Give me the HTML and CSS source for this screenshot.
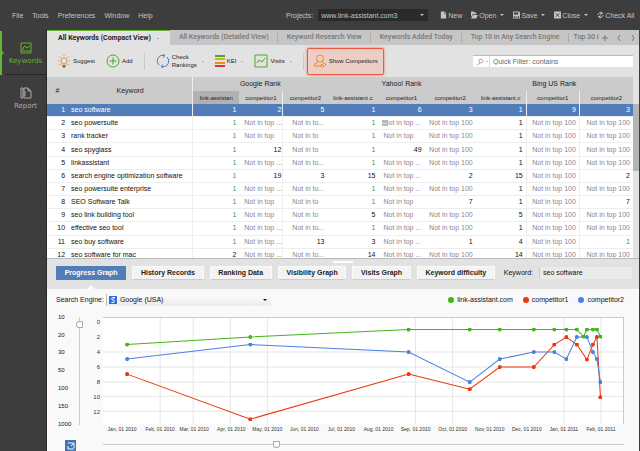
FILE: index.html
```html
<!DOCTYPE html>
<html lang="en">
<head>
    <meta charset="utf-8">
    <title>Rank Tracker</title>
    <link rel="stylesheet" href="styles.css">
</head>
<body>
    <header class="menubar">
        <nav class="menu">
            <a href="#">File</a>
            <a href="#">Tools</a>
            <a href="#">Preferences</a>
            <a href="#">Window</a>
            <a href="#">Help</a>
        </nav>
        <div class="project">
            <label for="project">Projects:</label>
            <span class="select dark">
                <select id="project"><option>www.link-assistant.com3</option></select>
            </span>
        </div>
        <div class="actions">
            <button><svg viewBox="0 0 8 8"><path d="M1 0h4v3h2v5H1zM5.500 0l2 2.500h-2z"/></svg>New</button>
            <button class="drop"><svg viewBox="0 0 8 8"><path d="M0 0h3l1 1h2v2H2L0 6zM2 4h6L6 8H0z"/></svg>Open</button>
            <button class="drop"><svg viewBox="0 0 8 8"><path fill-rule="evenodd" d="M0 0h7l1 1v7H0zM1 1v2.500h5V1zM1 5v2h6V5zM2 5.500h4v1H2z"/></svg>Save</button>
            <button class="drop"><svg viewBox="0 0 8 8"><path d="M0 0h8v8H0z"/><path class="cut" d="M2 2l4 4M6 2L2 6"/></svg>Close</button>
            <button><svg viewBox="0 0 8 8"><path class="line" d="M1 4a3 3 0 0 1 5-2M7 4a3 3 0 0 1-5 2"/><path d="M4 0l3 2-3 2zM4 4L1 6l3 2z"/></svg>Check All</button>
        </div>
    </header>

    <div class="app">
        <aside class="sidebar">
            <a href="#" class="side-item active">
                <svg viewBox="0 0 12 12"><path d="M1 1h10v10H1zM3 8V6l2-2 2 2 3-2M1 9h10"/></svg>
                Keywords
            </a>
            <a href="#" class="side-item">
                <svg viewBox="0 0 12 12"><path d="M1 1h2v10H1zM4 1h4l3 3v7H4zM8 1v3h3M5 4v5"/></svg>
                Report
            </a>
        </aside>

        <main class="main">
            <nav class="tabs">
                <a href="#" class="tab active">All Keywords (Compact View)</a>
                <a href="#" class="tab">All Keywords (Detailed View)</a>
                <a href="#" class="tab">Keyword Research View</a>
                <a href="#" class="tab">Keywords Added Today</a>
                <a href="#" class="tab">Top 10 in Any Search Engine</a>
                <a href="#" class="tab last">Top 30 i</a>
                <span class="tab-tools">
                    <button aria-label="Add tab"><svg viewBox="0 0 8 8"><path d="M4 1v6M1 4h6"/></svg></button>
                    <button aria-label="Previous"><svg viewBox="0 0 8 8"><path d="M5 1L3 4l2 3"/></svg></button>
                    <button aria-label="Next"><svg viewBox="0 0 8 8"><path d="M3 1l2 3-2 3"/></svg></button>
                </span>
            </nav>

            <div class="toolbar">
                <button class="tool">
                    <svg class="orange" viewBox="0 0 14 14"><path d="M5 10V9a3 3 0 1 1 4 0v1zM7 1v1M1 7h1M12 7h1M2.500 2.500l1 1M11.500 2.500l-1 1M2.500 11l1-1M11.500 11l-1-1"/><path class="base" d="M5 12h4M6 13h2"/></svg>
                    Suggest
                </button>
                <button class="tool">
                    <svg class="green" viewBox="0 0 14 14"><circle cx="7" cy="7" r="6"/><path d="M7 3.500v7M3.500 7h7"/></svg>
                    Add
                </button>
                <span class="divider"></span>
                <button class="tool drop">
                    <svg class="blue" viewBox="0 0 14 14"><path d="M3 11a5.500 5.500 0 0 1 5-9.400M11 3a5.500 5.500 0 0 1-5 9.400M7 0l2 1.600L7 3.500M7 10.500l-2 1.900L7 14"/></svg>
                    <span>Check<br>Rankings</span>
                </button>
                <button class="tool drop">
                    <svg class="bars" viewBox="0 0 10 14"><path class="b1" d="M0 2h10"/><path class="b2" d="M0 5h10"/><path class="b3" d="M0 9h10"/><path class="b4" d="M0 12h10"/></svg>
                    KEI
                </button>
                <button class="tool drop">
                    <svg class="green" viewBox="0 0 14 14"><path d="M1 1h12v12H1zM3 9l2-3 3 2 3-4"/></svg>
                    Visits
                </button>
                <span class="divider"></span>
                <button class="tool highlight">
                    <svg class="orange" viewBox="0 0 14 14"><circle cx="7" cy="4.500" r="3.500"/><path d="M5 8l-3.500 2v2h6M9 8l3.500 2v2"/><path d="M7 12l2-2 2 2-2 1z"/></svg>
                    Show Competitors
                </button>
                <div class="filter">
                    <button aria-label="Filter options"><svg viewBox="0 0 8 8"><circle cx="5" cy="3" r="2"/><path d="M4 5L1 7"/></svg></button>
                    <input type="text" aria-label="Quick filter" placeholder="Quick Filter: contains">
                </div>
            </div>

            <div class="grid">
                <table>
                    <colgroup>
                        <col class="c-num"><col class="c-key">
                        <col class="c-m"><col class="c-s"><col class="c-s">
                        <col class="c-l"><col class="c-m"><col class="c-l">
                        <col class="c-l"><col class="c-x"><col class="c-x">
                    </colgroup>
                    <thead>
                        <tr>
                            <th rowspan="2">#</th>
                            <th rowspan="2">Keyword</th>
                            <th colspan="3">Google Rank</th>
                            <th colspan="3">Yahoo! Rank</th>
                            <th colspan="3">Bing US Rank</th>
                        </tr>
                        <tr class="sub">
                            <th class="sorted">link-assistan</th><th>competitor1</th><th>competitor2</th>
                            <th>link-assistant.c</th><th>competitor1</th><th>competitor2</th>
                            <th>link-assistant.c</th><th>competitor1</th><th>competitor2</th>
                        </tr>
                    </thead>
                    <tbody>
                        <tr class="selected"><td>1</td><td>seo software</td><td>1</td><td>2</td><td>5</td><td>1</td><td>6</td><td>3</td><td>1</td><td>9</td><td>3</td></tr>
                        <tr><td>2</td><td>seo powersuite</td><td class="up">1</td><td class="none part">Not in top ...</td><td class="none part">Not in to...</td><td class="up">1</td><td class="none part"><span class="note">–</span>Not in top ...</td><td class="none">Not in top 100</td><td>1</td><td class="none">Not in top 100</td><td class="none">Not in top 100</td></tr>
                        <tr><td>3</td><td>rank tracker</td><td class="up">1</td><td class="none part">Not in top</td><td class="none part">Not in to</td><td class="up">1</td><td class="none part">Not in top</td><td class="none">Not in top 100</td><td>1</td><td class="none">Not in top 100</td><td class="none">Not in top 100</td></tr>
                        <tr><td>4</td><td>seo spyglass</td><td class="up">1</td><td>12</td><td class="none part">Not in to</td><td class="up">1</td><td>49</td><td class="none">Not in top 100</td><td>1</td><td class="none">Not in top 100</td><td class="none">Not in top 100</td></tr>
                        <tr><td>5</td><td>linkassistant</td><td class="up">1</td><td class="none part">Not in top ...</td><td class="none part">Not in to...</td><td class="up">1</td><td class="none part">Not in top ...</td><td class="none">Not in top 100</td><td>1</td><td class="none">Not in top 100</td><td class="none">Not in top 100</td></tr>
                        <tr><td>6</td><td>search engine optimization software</td><td class="up">1</td><td>19</td><td>3</td><td>15</td><td class="none part">Not in top ...</td><td>2</td><td>15</td><td class="none">Not in top 100</td><td>2</td></tr>
                        <tr><td>7</td><td>seo powersuite enterprise</td><td class="up">1</td><td class="none part">Not in top ...</td><td class="none part">Not in to...</td><td class="up">1</td><td class="none part">Not in top ...</td><td class="none">Not in top 100</td><td>1</td><td class="none">Not in top 100</td><td class="none">Not in top 100</td></tr>
                        <tr><td>8</td><td>SEO Software Talk</td><td class="up">1</td><td class="none part">Not in top</td><td class="none part">Not in to</td><td class="up">1</td><td class="none part">Not in top</td><td>7</td><td>1</td><td class="none">Not in top 100</td><td>7</td></tr>
                        <tr><td>9</td><td>seo link building tool</td><td class="up">1</td><td class="none part">Not in top</td><td class="none part">Not in to</td><td>5</td><td class="none part">Not in top</td><td class="none">Not in top 100</td><td>5</td><td class="none">Not in top 100</td><td class="none">Not in top 100</td></tr>
                        <tr><td>10</td><td>effective seo tool</td><td class="up">1</td><td class="none part">Not in top ...</td><td class="none part">Not in to...</td><td class="up">1</td><td class="none part">Not in top ...</td><td class="none">Not in top 100</td><td>1</td><td class="none">Not in top 100</td><td class="none">Not in top 100</td></tr>
                        <tr><td>11</td><td>seo buy software</td><td class="up">1</td><td class="none part">Not in top ...</td><td>13</td><td>3</td><td class="none part">Not in top ...</td><td>1</td><td>4</td><td class="none">Not in top 100</td><td class="up">1</td></tr>
                        <tr><td>12</td><td>seo software for mac</td><td>2</td><td class="none part">Not in top ...</td><td class="none part">Not in to...</td><td>14</td><td class="none part">Not in top ...</td><td class="none">Not in top 100</td><td>14</td><td class="none">Not in top 100</td><td class="none">Not in top 100</td></tr>
                    </tbody>
                </table>
                <div class="scroll"><div class="scroll-thumb"></div></div>
            </div>

            <div class="panel-bar">
                <button class="view active">Progress Graph</button>
                <button class="view">History Records</button>
                <button class="view">Ranking Data</button>
                <button class="view">Visibility Graph</button>
                <button class="view">Visits Graph</button>
                <button class="view">Keyword difficulty</button>
                <label for="keyword">Keyword:</label>
                <input id="keyword" type="text" value="seo software">
            </div>

            <section class="graph">
                <div class="graph-head">
                    <label for="engine">Search Engine:</label>
                    <span class="select light">
                        <svg viewBox="0 0 8 8"><path class="tile" d="M0 0h8v8H0z"/><path class="mark" d="M6 1.500H4a1 1 0 0 0 0 2.500 1 1 0 0 1 0 2.500H2.500M5 2v1"/></svg>
                        <select id="engine"><option>Google (USA)</option></select>
                    </span>
                    <ul class="legend">
                        <li class="g">link-assistant.com</li>
                        <li class="r">competitor1</li>
                        <li class="b">competitor2</li>
                    </ul>
                </div>
                <div class="graph-body">
                    <div class="scale">
                        <span>10</span><span>20</span><span>30</span><span>50</span><span>100</span><span>150</span><span>1000</span>
                    </div>
                    <input class="vrange" type="range" aria-label="Rank depth" min="0" max="100" value="4">
                    <svg class="chart" viewBox="87 313 536 122">
                        <path class="area" d="M103 317h520v107H103z"/>
                        <path class="gridline" d="M103 352h520M103 367h520M103 382h520M103 396h520M103 411h520M160 317v107M193 317v107M230 317v107M267 317v107M415 317v107M452 317v107M563 317v107M600 317v107"/>
                        <path class="frame" d="M103 317.500h519.500V424"/>
                        <g class="ylab">
                            <text x="100" y="324">0</text><text x="100" y="339">2</text><text x="100" y="354">4</text><text x="100" y="369">6</text><text x="100" y="384">8</text><text x="100" y="399">10</text><text x="100" y="414">12</text>
                        </g>
                        <g class="xlab">
                            <text x="122" y="431">Jan, 01 2010</text><text x="160" y="431">Feb, 01 2010</text><text x="194" y="431">Mar, 01 2010</text><text x="231" y="431">Apr, 01 2010</text><text x="267" y="431">May, 01 2010</text><text x="304" y="431">Jun, 01 2010</text><text x="341" y="431">Jul, 01 2010</text><text x="378" y="431">Aug, 01 2010</text><text x="415" y="431">Sep, 01 2010</text><text x="452" y="431">Oct, 01 2010</text><text x="489" y="431">Nov, 01 2010</text><text x="526" y="431">Dec, 01 2010</text><text x="563" y="431">Jan, 01 2011</text><text x="600" y="431">Feb, 01 2011</text>
                        </g>
                        <defs>
                            <marker id="dot-r" class="dot r" markerWidth="4" markerHeight="4" refX="2" refY="2" markerUnits="userSpaceOnUse"><circle cx="2" cy="2" r="2"/></marker>
                            <marker id="dot-b" class="dot b" markerWidth="4" markerHeight="4" refX="2" refY="2" markerUnits="userSpaceOnUse"><circle cx="2" cy="2" r="2"/></marker>
                            <marker id="dot-g" class="dot g" markerWidth="4" markerHeight="4" refX="2" refY="2" markerUnits="userSpaceOnUse"><circle cx="2" cy="2" r="2"/></marker>
                        </defs>
                        <polyline class="series r" points="127,374 250,419 408,374 469,389 499,367 533,367 553.5,344.5 565.5,337 576,344.5 586,359.5 592,344.5 596,337 599.5,397"/>
                        <polyline class="series b" points="127,359 250,344.5 408,352 469,382 499,359 533,352 553.5,352 565.5,359 576,337 586,337 592,352 596,359 599.5,382"/>
                        <polyline class="series g" points="127,344.5 250,337 408,329.5 469,329.5 499,329.5 533,329.5 553.5,329.5 565.5,329.5 576,329.5 582.5,336.5 586,329.5 592,329.5 596,329.5 599.5,336.5"/>
                    </svg>
                </div>
                <div class="graph-foot">
                    <button aria-label="Open graph"><svg viewBox="0 0 10 10"><path d="M2 2h6v5M8 2L5 5M2 5v3h6"/></svg></button>
                    <input type="range" aria-label="Timeline" min="0" max="100" value="33">
                </div>
            </section>
        </main>
    </div>
</body>
</html>
```
FILE: styles.css
```css
* { box-sizing: border-box; }

body {
    margin: 0;
    height: 100vh;
    display: flex;
    flex-direction: column;
    overflow: hidden;
    background: #3d3d3d;
    color: #111;
    font: 7px/9px "Liberation Sans", Arial, sans-serif;
}

a { color: inherit; text-decoration: none; }
button, input, select { font: inherit; color: inherit; margin: 0; padding: 0; border: 0; background: none; border-radius: 0; }
button { display: flex; align-items: center; white-space: nowrap; }
svg { display: block; flex: none; }

/* top menu */
.menubar { display: flex; align-items: center; height: 30px; color: #c4c4c4; white-space: nowrap; overflow: hidden; }
.menu { display: flex; gap: 9px; padding-left: 12px; width: 286px; flex: none; }
.project { display: flex; align-items: center; gap: 5px; flex: none; }
.select { position: relative; display: flex; align-items: center; }
.select select { appearance: none; width: 100%; outline: 0; }
.select::after, .drop::after { content: ""; border: 2px solid transparent; border-top-color: currentColor; border-bottom: 0; }
.select::after { position: absolute; right: 4px; pointer-events: none; }
.dark { width: 110px; height: 12px; padding-left: 3px; background: #2a2a2a; }
.actions { display: flex; gap: 9px; margin-left: 12px; }
.actions button { gap: 1px; }
.actions svg { width: 7px; height: 8px; fill: #c4c4c4; }
.actions .cut { stroke: #3d3d3d; }
.actions .line { fill: none; stroke: #c4c4c4; }
.drop::after { margin-left: 3px; }

.app { display: flex; flex: 1; min-height: 0; }

/* sidebar */
.sidebar { width: 47px; flex: none; padding-left: 5px; border-right: 1px solid #2b2b2b; }
.side-item { position: relative; display: flex; flex-direction: column; align-items: center; gap: 3px; height: 45px; padding-top: 12px; color: #aaa; font-family: "DejaVu Sans", sans-serif; }
.side-item svg { width: 12px; height: 12px; fill: none; stroke: currentColor; }
.side-item.active { color: #67b22e; border-bottom: 1px solid #262626; }
.side-item.active::before { content: ""; position: absolute; left: -5px; top: 1px; width: 2px; height: 44px; background: #67b22e; }
.side-item.active::after { content: ""; position: absolute; left: -3px; top: 21px; border: 2px solid transparent; border-left-color: #67b22e; border-right: 0; }

.main { flex: 1; min-width: 0; display: flex; flex-direction: column; margin-right: 1px; background: #e2e2e2; }

/* tabs */
.tabs { display: flex; height: 15px; background: #c6c6c6; color: #777; font-family: Roboto, sans-serif; font-weight: 500; line-height: 15px; white-space: nowrap; }
.tab { padding: 0 9px; position: relative; }
.tab.active { display: flex; align-items: center; padding: 0 11px; background: #e2e2e2; border-top: 1px solid #67b22e; color: #222; font-weight: 700; line-height: 13px; }
.tab.active::after { content: ""; margin-left: 6px; border: 1px solid transparent; border-top-color: #777; border-bottom: 0; }
.tab:not(.active):not(.last)::after { content: ""; position: absolute; right: 0; top: 3px; height: 9px; border-right: 1px solid #aaa; }
.tab.last { padding: 0 0 0 5px; }
.tab-tools { display: flex; align-items: center; gap: 6px; margin-left: auto; padding-right: 2px; }
.tab-tools svg { width: 8px; height: 8px; fill: none; stroke: #777; }

/* toolbar */
.toolbar { display: flex; align-items: center; height: 32px; padding: 0 6px 0 10px; }
.tool { gap: 2px; margin-right: 11px; font-size: 6px; line-height: 8px; text-align: left; color: #222; }
.tool svg { width: 14px; height: 14px; fill: none; stroke-width: 1; }
.tool .bars { width: 10px; stroke-width: 2; }
.tool.drop::after { border-width: 1px; border-bottom: 0; border-top-color: #888; }
.orange { stroke: #f08a24; }
.green { stroke: #4ba829; }
.blue { stroke: #4a7fc4; }
.base { stroke: #444; }
.b1 { stroke: #4ba829; }
.b2 { stroke: #c6b81e; }
.b3 { stroke: #f08a24; }
.b4 { stroke: #dd3a14; }
.divider { width: 1px; height: 17px; margin-right: 11px; background: #c8c8c8; }
.toolbar .divider + .highlight { margin-left: -8px; }
.highlight { height: 27px; padding: 0 5px; background: #ebcfc6; border: 1px solid #ee5a40; border-radius: 2px; box-shadow: 0 0 3px #f0765f; }
.filter { display: flex; width: 160px; height: 12px; margin-left: auto; background: #fff; border-top: 1px solid #bbb; }
.filter button { width: 17px; padding-left: 3px; border-right: 1px solid #ddd; }
.filter button::after { content: ""; margin-left: 2px; border: 1px solid transparent; border-top-color: #777; border-bottom: 0; }
.filter svg { width: 8px; height: 8px; fill: none; stroke: #aaa; }
.filter input { flex: 1; min-width: 0; padding-left: 3px; }
.filter input::placeholder { color: #666; opacity: 1; }

/* keywords table */
.grid { display: flex; flex: 1; min-height: 0; overflow: hidden; background: #fff; border-bottom: 1px solid #bbb; }
table { flex: 1; width: 100%; height: 185px; table-layout: fixed; border-collapse: separate; border-spacing: 0; }
.c-num { width: 21px; }
.c-key { width: 125px; }
.c-s { width: 44px; }
.c-m { width: 46px; }
.c-l { width: 51px; }
.c-x { width: 53px; }
th, td { padding: 0 3px; white-space: nowrap; line-height: 12px; }
th { height: 14px; padding: 0 2px; background: #cbcbcb; font-weight: 400; color: #222; }
.sub th { height: 13px; padding: 0 1px; font-size: 6px; }
.sub .sorted { background: #b1b1b1; }
td { position: relative; border-bottom: 1px solid #eee; text-align: right; }
td:nth-child(2) { text-align: left; }
td:nth-child(4) { padding-right: 1px; }
td:nth-child(2), thead tr:first-child th:nth-child(2) { border-right: 1px solid #eee; }
td:nth-child(4), td:nth-child(9), td:nth-child(10),
.sub th:nth-child(2), .sub th:nth-child(7), .sub th:nth-child(8) { border-right: 1px solid #eee; }
.up { color: #2f9a5c; }
.none { color: #8c8590; }
.part { padding: 0 0 0 5px; text-align: left; }
td.part:nth-child(5) { padding-left: 9px; }
.note { position: absolute; left: 3px; top: 3px; width: 6px; height: 6px; background: #b9b9b9; color: #fff; line-height: 5px; text-align: center; }
.selected td { background: #527db8; color: #fff; }
.scroll { width: 6px; flex: none; padding-top: 27px; background: #e2e2e2; }
.scroll-thumb { height: 67px; background: #b4b4b4; }

/* lower panel */
.panel-bar { position: relative; display: flex; align-items: center; gap: 6px; height: 30px; padding: 0 7px 2px 9px; }
.panel-bar::before { content: ""; position: absolute; left: 50%; top: 2px; width: 20px; height: 2px; margin-left: -10px; background: #fff; }
.view { position: relative; justify-content: center; height: 14px; padding: 0 6px; background: #f3f3f3; border: 1px solid #fafafa; border-bottom-color: #ccc; font-weight: 700; color: #222; flex: 1 0 auto; }
.view.active { background: #527db8; border-color: #527db8; color: #fff; }
.view.active::after { content: ""; position: absolute; left: 50%; bottom: -10px; margin-left: -4px; border: 4px solid transparent; border-bottom-color: #f9f9f9; border-top: 0; }
.panel-bar label { margin-left: 3px; }
.panel-bar input { width: 93px; height: 12px; padding-left: 3px; background: #ebebeb; border-left: 1px solid #ccc; }

.graph { background: #f9f9f9; padding: 5px 15px 0 9px; }
.graph-head { display: flex; align-items: center; height: 12px; }
.light { width: 165px; height: 12px; margin-left: 2px; padding-left: 2px; gap: 3px; background: linear-gradient(#fbfbfb, #ececec); border-left: 1px solid #bbb; }
.light svg { width: 8px; height: 8px; }
.tile { fill: #2f6fdc; }
.mark { fill: none; stroke: #fff; }
.legend { display: flex; gap: 10px; margin: 0 0 0 auto; padding: 0; list-style: none; }
.legend li { display: flex; align-items: center; gap: 3px; }
.legend li::before { content: ""; width: 6px; height: 6px; border-radius: 50%; background: currentColor; }
.legend li.g::before { background: #43b41c; }
.legend li.r::before { background: #e8380d; }
.legend li.b::before { background: #4d80e2; }

.graph-body { display: flex; margin-top: 7px; }
.scale { display: flex; flex-direction: column; justify-content: space-between; width: 19px; height: 116px; padding-left: 2px; font-size: 6px; }
.vrange { writing-mode: vertical-lr; appearance: none; width: 8px; height: 108px; margin: 4px 4px 0 0; }
.chart { flex: 1; min-width: 0; }
.area { fill: #fff; }
.gridline { fill: none; stroke: #e6e6e6; }
.frame { fill: none; stroke: #ccc; }
.chart text { font-size: 6px; fill: #333; }
.ylab { text-anchor: end; }
.xlab { text-anchor: middle; }
.chart .xlab text { font-size: 5px; }
.series { fill: none; stroke-width: 1; }
.series.r { stroke: #e8380d; marker: url(#dot-r); }
.series.b { stroke: #4d80e2; marker: url(#dot-b); }
.series.g { stroke: #43b41c; marker: url(#dot-g); }
.dot.r { fill: #e8380d; }
.dot.b { fill: #4d80e2; }
.dot.g { fill: #43b41c; }

.graph-foot { display: flex; align-items: flex-start; height: 16px; padding: 5px 0 0 9px; }
.graph-foot button { width: 11px; height: 11px; background: #3f73b5; justify-content: center; }
.graph-foot svg { width: 10px; height: 10px; fill: none; stroke: #fff; }
.graph-foot input { flex: 1; appearance: none; height: 8px; margin-left: 27px; }
input[type="range"]::-webkit-slider-runnable-track { background: linear-gradient(#ccc, #ccc) center / 100% 1px no-repeat; }
.vrange::-webkit-slider-runnable-track { background-size: 1px 100% !important; }
input[type="range"]::-webkit-slider-thumb { appearance: none; width: 7px; height: 7px; background: #fff; border: 1px solid #aaa; border-radius: 1px 1px 4px 4px; }
.vrange::-webkit-slider-thumb { border-radius: 4px 1px 1px 4px !important; }
```
